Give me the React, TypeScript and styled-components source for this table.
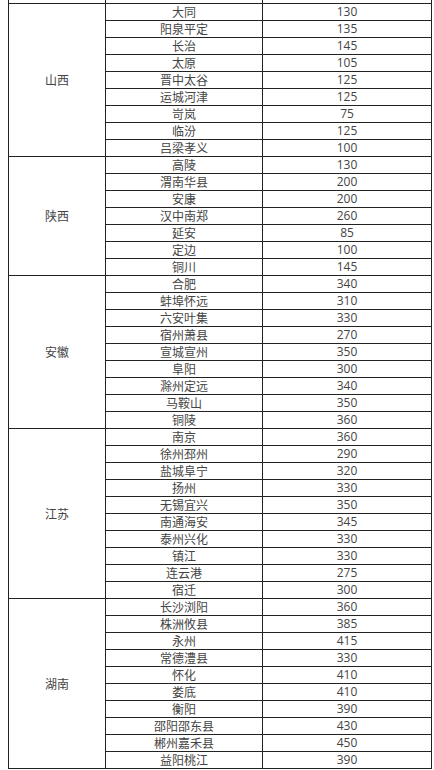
import React from "react";
import styled, { createGlobalStyle } from "styled-components";

const Global = createGlobalStyle`
  html, body { margin: 0; padding: 0; background: #fff; }
`;

const Page = styled.div`
  width: 434px;
  height: 770px;
  overflow: hidden;
  padding: 0 8px;
  box-sizing: border-box;
  background: #fff;
`;

const Table = styled.table`
  border-collapse: collapse;
  table-layout: fixed;
  width: 423px;
  margin-top: -14px;
  font-family: "Open Sans", "Noto Sans CJK SC", sans-serif;
  font-size: 12px;
  color: #444;
`;

const Cell = styled.td`
  border: 1px solid #222;
  padding: 0;
  height: 16px;
  line-height: 16px;
  text-align: center;
  vertical-align: middle;
  white-space: nowrap;
  overflow: hidden;
`;

const Province = styled(Cell)`
  font-family: "Noto Sans CJK SC", sans-serif;
`;

const City = styled(Cell)`
  font-family: "Noto Sans CJK SC", sans-serif;
`;

type Group = { name: string; rows: [string, number][] };

const data: Group[] = [
  {
    name: "山西",
    rows: [
      ["大同", 130],
      ["阳泉平定", 135],
      ["长治", 145],
      ["太原", 105],
      ["晋中太谷", 125],
      ["运城河津", 125],
      ["岢岚", 75],
      ["临汾", 125],
      ["吕梁孝义", 100],
    ],
  },
  {
    name: "陕西",
    rows: [
      ["高陵", 130],
      ["渭南华县", 200],
      ["安康", 200],
      ["汉中南郑", 260],
      ["延安", 85],
      ["定边", 100],
      ["铜川", 145],
    ],
  },
  {
    name: "安徽",
    rows: [
      ["合肥", 340],
      ["蚌埠怀远", 310],
      ["六安叶集", 330],
      ["宿州萧县", 270],
      ["宣城宣州", 350],
      ["阜阳", 300],
      ["滁州定远", 340],
      ["马鞍山", 350],
      ["铜陵", 360],
    ],
  },
  {
    name: "江苏",
    rows: [
      ["南京", 360],
      ["徐州邳州", 290],
      ["盐城阜宁", 320],
      ["扬州", 330],
      ["无锡宜兴", 350],
      ["南通海安", 345],
      ["泰州兴化", 330],
      ["镇江", 330],
      ["连云港", 275],
      ["宿迁", 300],
    ],
  },
  {
    name: "湖南",
    rows: [
      ["长沙浏阳", 360],
      ["株洲攸县", 385],
      ["永州", 415],
      ["常德澧县", 330],
      ["怀化", 410],
      ["娄底", 410],
      ["衡阳", 390],
      ["邵阳邵东县", 430],
      ["郴州嘉禾县", 450],
      ["益阳桃江", 390],
    ],
  },
];

export default function App() {
  return (
    <Page>
      <Global />
      <Table>
        <colgroup>
          <col style={{ width: 97 }} />
          <col style={{ width: 157 }} />
          <col style={{ width: 169 }} />
        </colgroup>
        <tbody>
          <tr>
            <Cell />
            <Cell />
            <Cell />
          </tr>
          {data.map((g) =>
            g.rows.map(([city, v], i) => (
              <tr key={g.name + city}>
                {i === 0 && <Province rowSpan={g.rows.length}>{g.name}</Province>}
                <City>{city}</City>
                <Cell>{v}</Cell>
              </tr>
            ))
          )}
        </tbody>
      </Table>
    </Page>
  );
}
